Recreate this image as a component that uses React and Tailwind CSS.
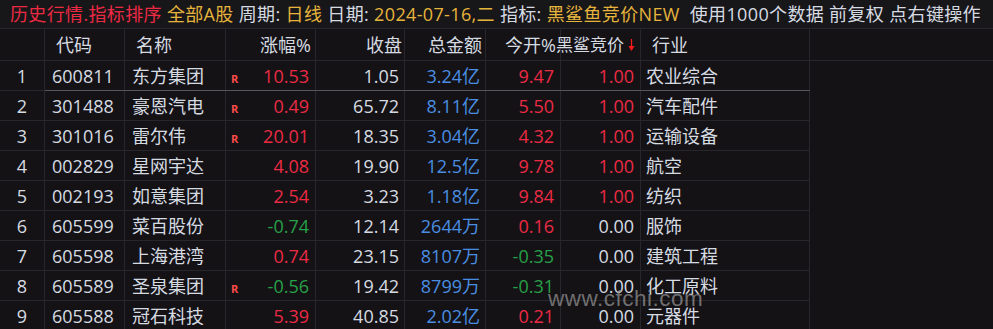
import React from "react";

const RED = "text-[#ec2a44]";
const WHITE = "text-[#d6dbe2]";
const BLUE = "text-[#4a8ee2]";
const GREEN = "text-[#27a048]";
const YELLOW = "text-[#e6b43c]";

const rows = [
  ["1", "600811", "东方集团", true, "10.53", RED, "1.05", "3.24亿", "9.47", RED, "1.00", RED, "农业综合"],
  ["2", "301488", "豪恩汽电", true, "0.49", RED, "65.72", "8.11亿", "5.50", RED, "1.00", RED, "汽车配件"],
  ["3", "301016", "雷尔伟", true, "20.01", RED, "18.35", "3.04亿", "4.32", RED, "1.00", RED, "运输设备"],
  ["4", "002829", "星网宇达", false, "4.08", RED, "19.90", "12.5亿", "9.78", RED, "1.00", RED, "航空"],
  ["5", "002193", "如意集团", false, "2.54", RED, "3.23", "1.18亿", "9.84", RED, "1.00", RED, "纺织"],
  ["6", "605599", "菜百股份", false, "-0.74", GREEN, "12.14", "2644万", "0.16", RED, "0.00", WHITE, "服饰"],
  ["7", "605598", "上海港湾", false, "0.74", RED, "23.15", "8107万", "-0.35", GREEN, "0.00", WHITE, "建筑工程"],
  ["8", "605589", "圣泉集团", true, "-0.56", GREEN, "19.42", "8799万", "-0.31", GREEN, "0.00", WHITE, "化工原料"],
  ["9", "605588", "冠石科技", false, "5.39", RED, "40.85", "2.02亿", "0.21", RED, "0.00", WHITE, "元器件"],
];

const cols = "grid grid-cols-[45px_80px_101px_90px_89px_81px_75px_80px_169px_1fr]";
const cell = "border-r border-[#26262c] flex items-center overflow-visible whitespace-nowrap";

export default function App() {
  return (
    <div
      className="relative w-[993px] h-[329px] overflow-hidden bg-[#141215] text-[18px] leading-none"
      style={{ fontFamily: '"Open Sans", "Noto Sans CJK SC", sans-serif' }}
    >
      {/* top status line */}
      <div className="h-[29px] flex items-center pl-[10px] bg-[#171619] border-b border-[#26262c] whitespace-pre text-[18px] tracking-[0.35px]">
        <span className={RED}>历史行情.指标排序</span>
        <span> </span>
        <span className={YELLOW}>全部A股</span>
        <span className={WHITE}> 周期: </span>
        <span className={YELLOW}>日线</span>
        <span className={WHITE}> 日期: </span>
        <span className={YELLOW}>2024-07-16,二</span>
        <span className={WHITE}> 指标: </span>
        <span className={YELLOW}>黑鲨鱼竞价NEW</span>
        <span className={WHITE}>  使用1000个数据 前复权 点右键操作</span>
      </div>

      {/* header */}
      <div className={`${cols} h-[32px] border-b border-[#26262c] ${WHITE}`}>
        <div className={cell}></div>
        <div className={`${cell} pl-[11px]`}>代码</div>
        <div className={`${cell} pl-[11px]`}>名称</div>
        <div className={`${cell} justify-end pr-[4px]`}>涨幅%</div>
        <div className={`${cell} justify-end pr-[2px]`}>收盘</div>
        <div className={`${cell} justify-end pr-[3px]`}>总金额</div>
        <div className={`${cell} justify-end pr-[4px]`}>今开%</div>
        <div className={`${cell} justify-end pr-[4px]`}>
          <div className="flex items-center shrink-0 -ml-[24px]">
            <span className="text-[17px]">黑鲨竞价</span>
            <svg width="9" height="14" viewBox="0 0 9 14" className="ml-[3px] shrink-0">
              <line x1="4.5" y1="1" x2="4.5" y2="10" stroke="#ff1a1a" strokeWidth="1.3" />
              <path d="M1.5 8 L4.5 13 L7.5 8 Z" fill="#ff1a1a" />
            </svg>
          </div>
        </div>
        <div className={`${cell} pl-[11px]`}>行业</div>
        <div></div>
      </div>

      {/* rows */}
      {rows.map((r, i) => (
        <div key={r[0]} className={`${cols} h-[30px]`}>
          <div className={`${cell} justify-center border-b border-[#26262c] ${WHITE}`}>{r[0]}</div>
          <div
            className={`col-span-8 grid grid-cols-[80px_101px_90px_89px_81px_75px_80px_169px] border-b ${
              i === 0 ? "border-[#56565c]" : "border-[#26262c]"
            }`}
          >
            <div className={`${cell} pl-[7px] ${WHITE}`}>{r[1]}</div>
            <div className={`${cell} pl-[7px] ${WHITE}`}>{r[2]}</div>
            <div className={`${cell} justify-between pl-[5px] pr-[6px]`}>
              <span className="text-[11px] font-bold text-[#ff4a4a] pt-[6px]">{r[3] ? "R" : ""}</span>
              <span className={r[5]}>{r[4]}</span>
            </div>
            <div className={`${cell} justify-end pr-[5px] ${WHITE}`}>{r[6]}</div>
            <div className={`${cell} justify-end pr-[5px] ${BLUE}`}>{r[7]}</div>
            <div className={`${cell} justify-end pr-[6px] ${r[9]}`}>{r[8]}</div>
            <div className={`${cell} justify-end pr-[6px] ${r[11]}`}>{r[10]}</div>
            <div className={`${cell} pl-[5px] ${WHITE}`}>{r[12]}</div>
          </div>
          <div></div>
        </div>
      ))}

      {/* watermark */}
      <div
        className="absolute left-[548px] top-[288px] text-[22.5px] text-[#9a9a9a]/70 tracking-[0.5px]"
        style={{ fontFamily: '"Liberation Sans", sans-serif' }}
      >
        www.cfchi.com
      </div>
    </div>
  );
}
